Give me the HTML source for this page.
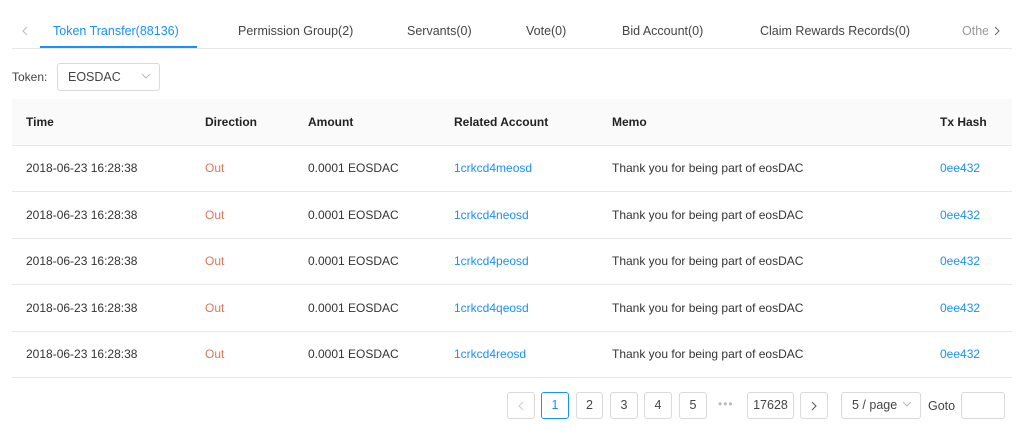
<!DOCTYPE html><html><head><style>
body{margin:0;width:1024px;height:440px;background:#fff;font-family:"Liberation Sans",sans-serif;font-size:12px;color:#333;position:relative;overflow:hidden}
.a{position:absolute;white-space:nowrap}
.tab{top:24px;font-size:12.5px;color:#444}
.cell{font-size:12px;color:#333}
.pb{position:absolute;top:392px;height:25px;border:1px solid #d9d9d9;border-radius:3px;text-align:center;line-height:25px;font-size:12.5px;color:#444;box-sizing:content-box}
.line{position:absolute;left:12px;width:1000px;height:1px;background:#e8e8e8}
</style></head><body>
<svg class="a" style="left:21px;top:26px" width="8" height="10"><path d="M6 1L2 5l4 4" stroke="#bbb" fill="none"/></svg>
<div class="a tab" style="left:53px;color:#1890ff">Token Transfer(88136)</div>
<div class="a tab" style="left:238px">Permission Group(2)</div>
<div class="a tab" style="left:407px">Servants(0)</div>
<div class="a tab" style="left:526px">Vote(0)</div>
<div class="a tab" style="left:622px">Bid Account(0)</div>
<div class="a tab" style="left:760px">Claim Rewards Records(0)</div>
<div class="a tab" style="left:962px;color:#999;width:26px;overflow:hidden">Others</div>
<svg class="a" style="left:993px;top:26px" width="8" height="10"><path d="M2 1l4 4-4 4" stroke="#666" fill="none"/></svg>
<div class="line" style="top:48px"></div>
<div class="a" style="left:40px;top:46px;width:157px;height:2px;background:#1890ff"></div>
<div class="a" style="left:12px;top:70px;color:#444">Token:</div>
<div class="a" style="left:57px;top:63px;width:101px;height:26px;border:1px solid #d9d9d9;border-radius:3px"></div>
<div class="a" style="left:68px;top:70px;color:#444;font-size:12.5px">EOSDAC</div>
<svg class="a" style="left:141px;top:73px" width="10" height="6"><path d="M1 1l4 4 4-4" stroke="#bbb" fill="none"/></svg>
<div class="a" style="left:12px;top:99px;width:1000px;height:46px;background:#fafafa"></div>
<div class="a cell" style="left:26px;top:115px;font-weight:bold;color:#222">Time</div>
<div class="a cell" style="left:205px;top:115px;font-weight:bold;color:#222">Direction</div>
<div class="a cell" style="left:308px;top:115px;font-weight:bold;color:#222">Amount</div>
<div class="a cell" style="left:454px;top:115px;font-weight:bold;color:#222">Related Account</div>
<div class="a cell" style="left:612px;top:115px;font-weight:bold;color:#222">Memo</div>
<div class="a cell" style="left:940px;top:115px;font-weight:bold;color:#222">Tx Hash</div>
<div class="line" style="top:145px"></div>
<div id="rows"></div>
<script>
var L=['m','n','p','q','r'],h='';
for(var i=0;i<5;i++){var y=161+i*46.5;
h+='<div class="a cell" style="left:26px;top:'+y+'px">2018-06-23 16:28:38</div><div class="a cell" style="left:205px;top:'+y+'px;color:#d9775c">Out</div><div class="a cell" style="left:308px;top:'+y+'px">0.0001 EOSDAC</div><div class="a cell" style="left:454px;top:'+y+'px;color:#1890ff">1crkcd4'+L[i]+'eosd</div><div class="a cell" style="left:612px;top:'+y+'px">Thank you for being part of eosDAC</div><div class="a cell" style="left:940px;top:'+y+'px;color:#1890ff">0ee432</div><div class="line" style="top:'+(191+i*46.5)+'px"></div>';}
document.getElementById('rows').innerHTML=h;
</script>
<div class="pb" style="left:507px;width:26px"><svg width="8" height="10" style="margin-top:8px"><path d="M6 1L2 5l4 4" stroke="#ccc" fill="none"/></svg></div>
<div class="pb" style="left:541px;width:26px;border-color:#1890ff;color:#1890ff">1</div>
<div class="pb" style="left:576px;width:25px">2</div>
<div class="pb" style="left:610px;width:26px">3</div>
<div class="pb" style="left:644px;width:26px">4</div>
<div class="pb" style="left:679px;width:26px">5</div>
<div class="a" style="left:718px;top:397px;color:#bbb;letter-spacing:1px">•••</div>
<div class="pb" style="left:747px;width:45px">17628</div>
<div class="pb" style="left:800px;width:26px"><svg width="8" height="10" style="margin-top:8px"><path d="M2 1l4 4-4 4" stroke="#555" fill="none"/></svg></div>
<div class="pb" style="left:841px;width:78px;text-align:left"><span style="margin-left:10px">5 / page</span><svg width="10" height="6" style="margin-left:5px;vertical-align:2px"><path d="M1 1l4 4 4-4" stroke="#bbb" fill="none"/></svg></div>
<div class="a" style="left:928px;top:399px;font-size:12.5px;color:#444">Goto</div>
<div class="pb" style="left:961px;width:42px"></div>
</body></html>
